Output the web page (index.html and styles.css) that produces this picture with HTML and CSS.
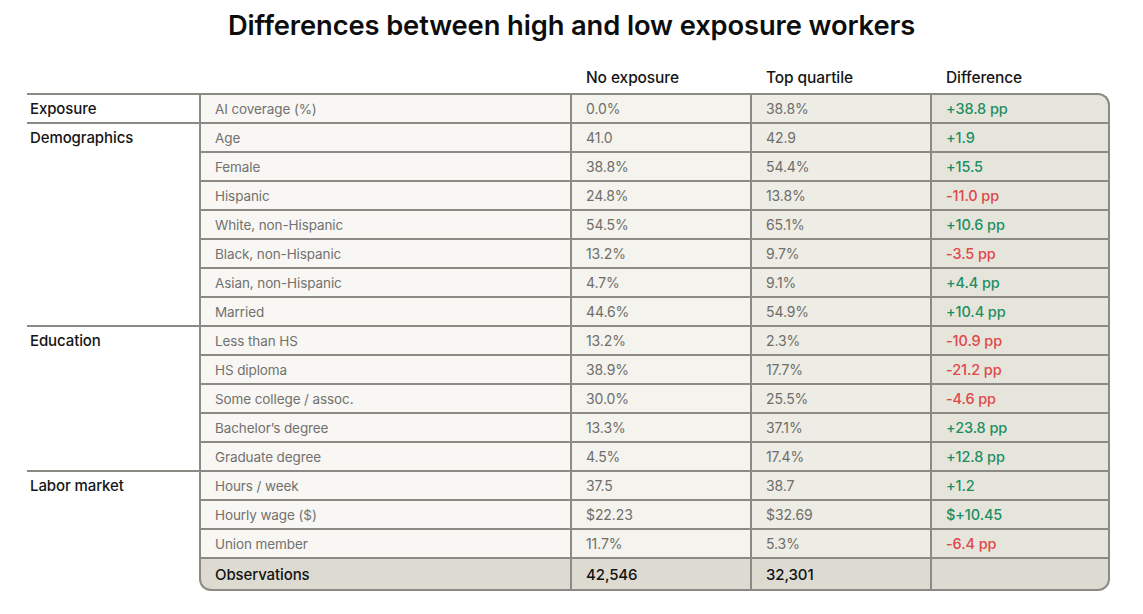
FILE: index.html
```html
<!DOCTYPE html>
<html>
<head>
<meta charset="utf-8">
<link rel="stylesheet" href="styles.css">
</head>
<body>
<h1 class="title">Differences between high and low exposure workers</h1>
<table class="tbl">
  <colgroup>
    <col class="c-group"><col class="c-sub"><col class="c-val"><col class="c-val"><col class="c-val">
  </colgroup>
  <thead>
    <tr class="head">
      <th></th><th></th><th>No exposure</th><th>Top quartile</th><th>Difference</th>
    </tr>
  </thead>
  <tbody>
    <tr class="first">
      <td class="group" rowspan="1">Exposure</td>
      <td class="sub">AI coverage (%)</td><td class="v1">0.0%</td><td class="v2">38.8%</td><td class="v3 pos tr">+38.8 pp</td>
    </tr>
    <tr>
      <td class="group" rowspan="7">Demographics</td>
      <td class="sub">Age</td><td class="v1">41.0</td><td class="v2">42.9</td><td class="v3 pos">+1.9</td>
    </tr>
    <tr><td class="sub">Female</td><td class="v1">38.8%</td><td class="v2">54.4%</td><td class="v3 pos">+15.5</td></tr>
    <tr><td class="sub">Hispanic</td><td class="v1">24.8%</td><td class="v2">13.8%</td><td class="v3 neg">-11.0 pp</td></tr>
    <tr><td class="sub">White, non-Hispanic</td><td class="v1">54.5%</td><td class="v2">65.1%</td><td class="v3 pos">+10.6 pp</td></tr>
    <tr><td class="sub">Black, non-Hispanic</td><td class="v1">13.2%</td><td class="v2">9.7%</td><td class="v3 neg">-3.5 pp</td></tr>
    <tr><td class="sub">Asian, non-Hispanic</td><td class="v1">4.7%</td><td class="v2">9.1%</td><td class="v3 pos">+4.4 pp</td></tr>
    <tr><td class="sub">Married</td><td class="v1">44.6%</td><td class="v2">54.9%</td><td class="v3 pos">+10.4 pp</td></tr>
    <tr>
      <td class="group" rowspan="5">Education</td>
      <td class="sub">Less than HS</td><td class="v1">13.2%</td><td class="v2">2.3%</td><td class="v3 neg">-10.9 pp</td>
    </tr>
    <tr><td class="sub">HS diploma</td><td class="v1">38.9%</td><td class="v2">17.7%</td><td class="v3 neg">-21.2 pp</td></tr>
    <tr><td class="sub">Some college / assoc.</td><td class="v1">30.0%</td><td class="v2">25.5%</td><td class="v3 neg">-4.6 pp</td></tr>
    <tr><td class="sub">Bachelor’s degree</td><td class="v1">13.3%</td><td class="v2">37.1%</td><td class="v3 pos">+23.8 pp</td></tr>
    <tr><td class="sub">Graduate degree</td><td class="v1">4.5%</td><td class="v2">17.4%</td><td class="v3 pos">+12.8 pp</td></tr>
    <tr>
      <td class="group" rowspan="4">Labor market</td>
      <td class="sub">Hours / week</td><td class="v1">37.5</td><td class="v2">38.7</td><td class="v3 pos">+1.2</td>
    </tr>
    <tr><td class="sub">Hourly wage ($)</td><td class="v1">$22.23</td><td class="v2">$32.69</td><td class="v3 pos">$+10.45</td></tr>
    <tr><td class="sub">Union member</td><td class="v1">11.7%</td><td class="v2">5.3%</td><td class="v3 neg">-6.4 pp</td></tr>
    <tr class="obs">
      <td class="sub bl">Observations</td><td class="v1">42,546</td><td class="v2">32,301</td><td class="v3 br"></td>
    </tr>
  </tbody>
</table>
</body>
</html>
```

FILE: styles.css
```css
html, body {
  margin: 0;
  padding: 0;
  background: #ffffff;
}
body {
  font-family: Inter, "Noto Sans", "DejaVu Sans", sans-serif;
  color: #111111;
}
.title {
  margin: 9px 0 0 0;
  font-size: 27.3px;
  line-height: 34px;
  font-weight: 600;
  letter-spacing: -0.1px;
  text-align: center;
  color: #0d0d0d;
}
.tbl {
  margin: 18px 0 0 27px;
  border-collapse: separate;
  border-spacing: 0;
  table-layout: fixed;
  width: 1083px;
}
.c-group { width: 172px; }
.c-sub { width: 371px; }
.c-val { width: 180px; }

.head th {
  height: 32px;
  padding: 0 0 0 16px;
  text-align: left;
  font-weight: 500;
  font-size: 15.5px;
  letter-spacing: -0.1px;
  color: #161616;
  vertical-align: middle;
}

.tbl td {
  height: 27px;
  padding: 0 0 0 14px;
  border-top: 2px solid #8c8a84;
  font-size: 14px;
  letter-spacing: -0.1px;
  vertical-align: middle;
  color: #6f6e69;
  white-space: nowrap;
}
.tbl td.group {
  padding: 0 0 0 3px;
  vertical-align: top;
  line-height: 27px;
  font-size: 15px;
  font-weight: 500;
  color: #151515;
}
.tbl td.sub {
  border-left: 2px solid #8c8a84;
  background: #f8f7f3;
  color: #727170;
  font-size: 13.5px;
}
.tbl td.v1 {
  border-left: 2px solid #8c8a84;
  background: #f4f3ee;
}
.tbl td.v2 {
  border-left: 2px solid #8c8a84;
  background: #edece5;
}
.tbl td.v3 {
  border-left: 2px solid #8c8a84;
  border-right: 2px solid #8c8a84;
  background: #e6e5dc;
  font-weight: 500;
  font-size: 14.5px;
}
.tbl td.pos { color: #1d8e62; }
.tbl td.neg { color: #e0474a; }
.tbl td.tr { border-top-right-radius: 12px; }

.obs td {
  height: 30px;
  border-bottom: 2px solid #8c8a84;
}
.tbl .obs td.sub,
.tbl .obs td.v1,
.tbl .obs td.v2,
.tbl .obs td.v3 {
  background: #dddbd1;
  color: #121212;
  font-size: 15px;
  font-weight: 500;
}
.tbl .obs td.bl { border-bottom-left-radius: 12px; }
.tbl .obs td.br { border-bottom-right-radius: 12px; }
```
